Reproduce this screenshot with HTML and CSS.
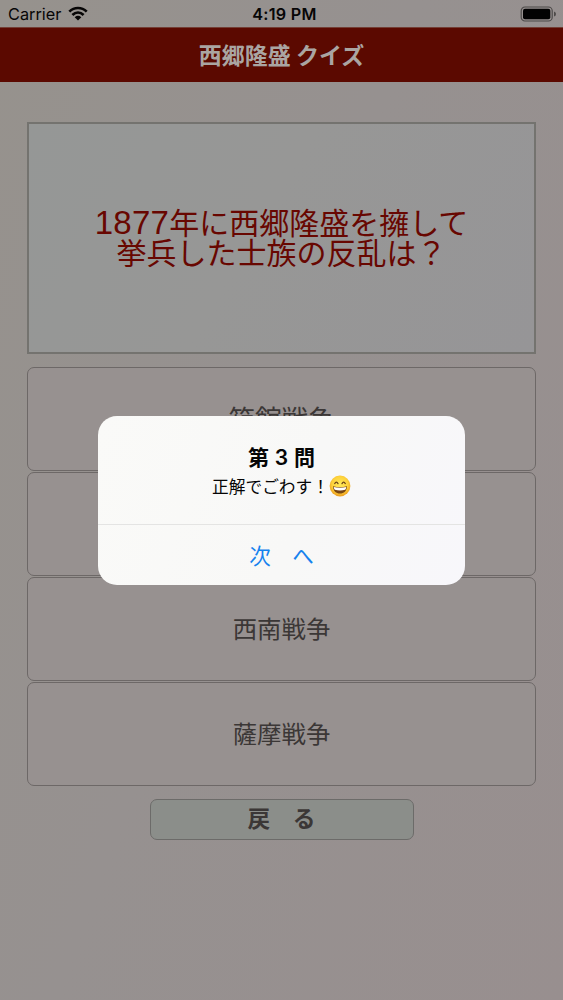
FILE: index.html
```
<!DOCTYPE html>
<html lang="ja">
<head>
<meta charset="utf-8">
<title>西郷隆盛 クイズ</title>
<link rel="stylesheet" href="styles.css">
</head>
<body>
<div class="screen">
  <div class="status">
    <div class="carrier">
      <span>Carrier</span>
      <svg class="wifi" viewBox="0 0 20 15" width="20" height="15">
        <g fill="none" stroke="#070606" stroke-width="2.7">
          <path d="M1.3 5.6C6.3.8 13.7.8 18.7 5.6"/>
          <path d="M4.4 8.9C7.7 5.8 12.3 5.8 15.6 8.9"/>
        </g>
        <path d="M6.7 11.2Q10 8.4 13.3 11.2L10 14.4Z" fill="#070606"/>
      </svg>
    </div>
    <div class="time">4:19 PM</div>
    <svg class="battery" viewBox="0 0 36 16" width="36" height="16">
      <rect x="1.2" y="1" width="31" height="14" rx="3.8" fill="none" stroke="#4d4a49" stroke-width="1.2"/>
      <rect x="3" y="2.8" width="27.3" height="10.4" rx="2" fill="#020202"/>
      <path d="M34 5.4Q36 6 36 8T34 10.6Z" fill="#4d4a49"/>
    </svg>
  </div>
  <header class="title">西郷隆盛 クイズ</header>
  <main class="quiz">
    <div class="question">
      <div class="line"><span class="digits">1877</span>年に西郷隆盛を擁して</div>
      <div class="line">挙兵した士族の反乱は？</div>
    </div>
    <div class="answers">
      <div class="answer large">箱館戦争</div>
      <div class="answer"></div>
      <div class="answer">西南戦争</div>
      <div class="answer">薩摩戦争</div>
    </div>
    <div class="back">戻　る</div>
  </main>
  <div class="alert">
    <div class="message">
      <div class="heading">第 <span class="number">3</span> 問</div>
      <div class="result">
        <span>正解でごわす！</span>
        <svg class="emoji" viewBox="0 0 22 22" width="22" height="22">
          <defs>
            <radialGradient id="face" cx=".5" cy=".42" r=".58">
              <stop offset="0" stop-color="#ffe95a"/>
              <stop offset=".65" stop-color="#fdd23b"/>
              <stop offset="1" stop-color="#ec9a1c"/>
            </radialGradient>
          </defs>
          <circle cx="11" cy="11" r="10.4" fill="url(#face)"/>
          <g fill="none" stroke="#684017" stroke-width="1.2" stroke-linecap="round">
            <path d="M5.7 8.6Q7.4 5.6 9 8.6"/>
            <path d="M13 8.6Q14.6 5.6 16.3 8.6"/>
          </g>
          <path d="M4 11.3Q11 13 18 11.3C17.8 16 15 18.6 11 18.6S4.2 16 4 11.3Z" fill="#784512"/>
          <path d="M4.7 12Q11 13.6 17.3 12Q17 14 16.2 14.8Q11 16 5.8 14.8Q5 14 4.7 12Z" fill="#fff"/>
        </svg>
      </div>
    </div>
    <div class="next">次　へ</div>
  </div>
</div>
</body>
</html>
```
FILE: styles.css
```
* { box-sizing: border-box; }
body { margin: 0; }
.screen {
  position: relative;
  width: 563px;
  height: 1000px;
  overflow: hidden;
  background: linear-gradient(110deg, #96928d 0%, #969190 45%, #988f8f 100%);
  font-family: "Noto Sans CJK JP", sans-serif;
  color: #3b3736;
}
.status {
  display: grid;
  grid-template-columns: 1fr auto 1fr;
  align-items: center;
  height: 27px;
  padding: 1px 7px 0 8px;
  font: 16.3px/26px Inter, sans-serif;
  color: #070606;
}
.carrier { display: flex; align-items: center; gap: 7px; }
.wifi { margin-top: -2px; }
.time { font-weight: 600; font-size: 16.2px; letter-spacing: .25px; padding-left: 5px; }
.battery { justify-self: end; }
.title {
  height: 55px;
  background: #5b0900;
  border-top: 1px solid #733e35;
  color: #aaa5a2;
  font-size: 23px;
  font-weight: 700;
  line-height: 52px;
  text-align: center;
}
.quiz { padding: 40px 27px 0; }
.question {
  display: flex;
  flex-direction: column;
  justify-content: center;
  height: 232px;
  padding-bottom: 4px;
  border: 2px solid #74736f;
  background: linear-gradient(120deg, #959796, #979796 45%, #969597);
  color: #680701;
  font-size: 30px;
  line-height: 30px;
  text-align: center;
  white-space: nowrap;
}
.line { height: 30px; }
.digits { font-family: "Liberation Sans", sans-serif; font-size: 33px; letter-spacing: .3px; }
.answers { display: flex; flex-direction: column; gap: 1px; margin-top: 13px; }
.answer {
  display: flex;
  align-items: center;
  justify-content: center;
  height: 104px;
  padding-bottom: 2px;
  border: 1.5px solid #6d6867;
  border-radius: 7px;
  background: #979190;
  font-size: 24.4px;
  line-height: 30px;
}
.large { font-size: 26.5px; }
.back {
  width: 264px;
  height: 41px;
  margin: 13px auto 0;
  border: 1.5px solid #6c6b69;
  border-radius: 7px;
  background: #8b8e8a;
  font-size: 22.7px;
  font-weight: 700;
  line-height: 36px;
  text-align: center;
}
.alert {
  position: absolute;
  top: 416px;
  left: 98px;
  width: 367px;
  height: 169px;
  border-radius: 19px;
  background: linear-gradient(110deg, #fafaf8, #f8f8f7 55%, #f8f7fb);
  color: #050505;
  text-align: center;
}
.message { height: 109px; padding-top: 25px; border-bottom: 1px solid #e4e4e3; }
.heading { height: 30px; font-size: 21px; line-height: 30px; font-weight: 700; }
.number { font-family: Inter, sans-serif; font-weight: 600; padding: 0 1px; }
.result {
  display: flex;
  align-items: center;
  justify-content: center;
  height: 29px;
  font-size: 16.7px;
}
.next { color: #1682ee; font-size: 21.5px; line-height: 59px; }
```
